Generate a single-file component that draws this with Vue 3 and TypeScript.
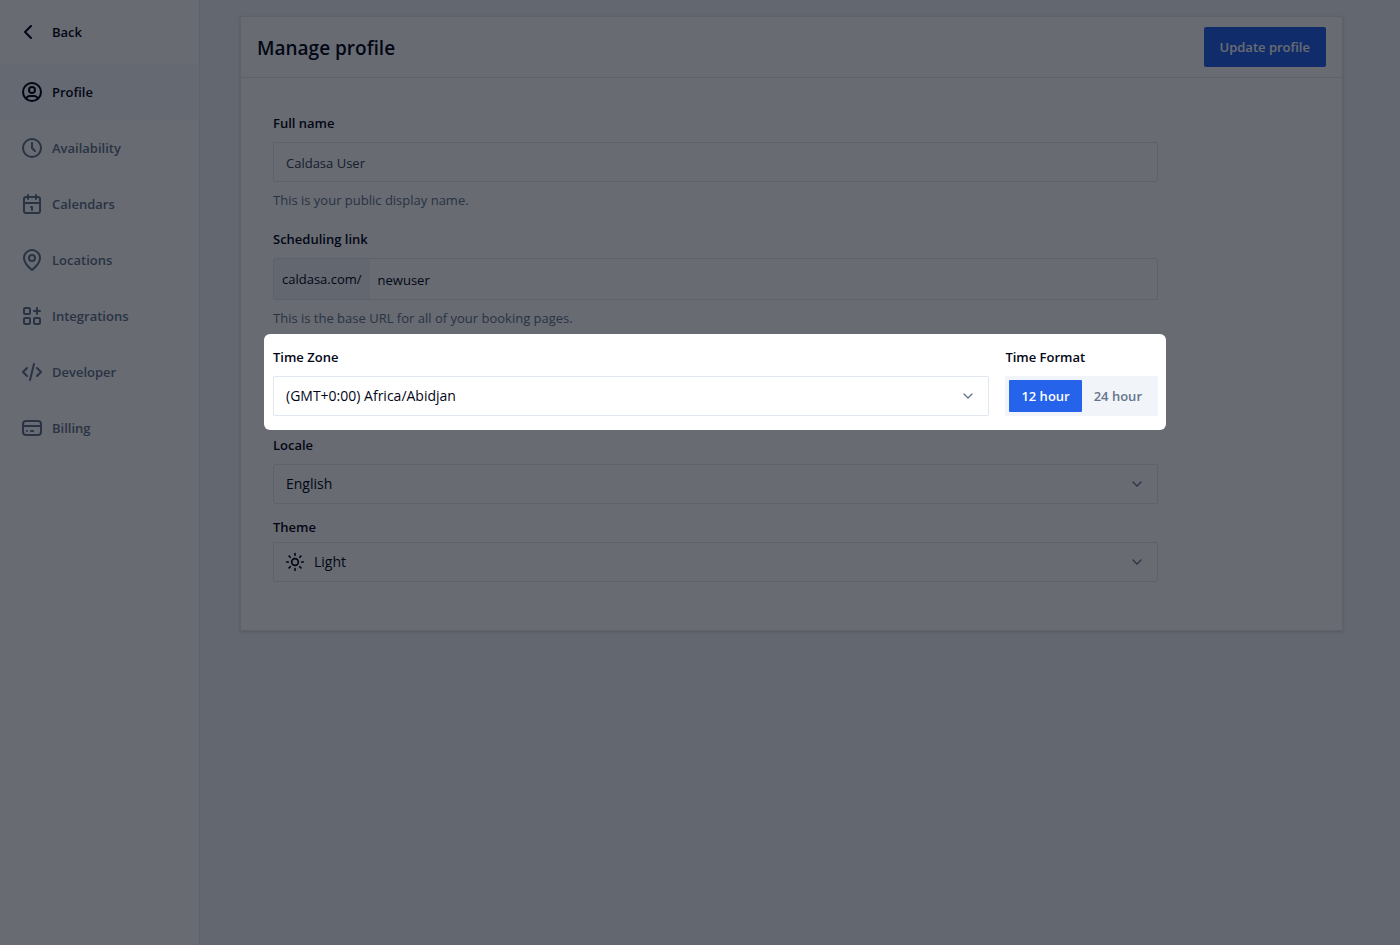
<script setup lang="ts">
import { ref } from 'vue'

interface NavItem {
  label: string
  paths: string[]
}

const navItems: NavItem[] = [
  {
    label: 'Profile',
    paths: [
      'M3 12a9 9 0 1 0 18 0a9 9 0 1 0-18 0',
      'M9 10a3 3 0 1 0 6 0a3 3 0 1 0-6 0',
      'M6.168 18.849A4 4 0 0 1 10 16h4a4 4 0 0 1 3.834 2.855',
    ],
  },
  { label: 'Availability', paths: ['M3 12a9 9 0 1 0 18 0a9 9 0 1 0-18 0', 'M12 7v5l3 3'] },
  {
    label: 'Calendars',
    paths: [
      'M6 5h12a2 2 0 0 1 2 2v12a2 2 0 0 1-2 2H6a2 2 0 0 1-2-2V7a2 2 0 0 1 2-2z',
      'M16 3v4M8 3v4M4 11h16M11 15h1v3',
    ],
  },
  {
    label: 'Locations',
    paths: ['M20 10c0 6-8 12-8 12s-8-6-8-12a8 8 0 0 1 16 0z', 'M9 10a3 3 0 1 0 6 0a3 3 0 1 0-6 0'],
  },
  {
    label: 'Integrations',
    paths: [
      'M5 4h4a1 1 0 0 1 1 1v4a1 1 0 0 1-1 1H5a1 1 0 0 1-1-1V5a1 1 0 0 1 1-1z',
      'M5 14h4a1 1 0 0 1 1 1v4a1 1 0 0 1-1 1H5a1 1 0 0 1-1-1v-4a1 1 0 0 1 1-1z',
      'M15 14h4a1 1 0 0 1 1 1v4a1 1 0 0 1-1 1h-4a1 1 0 0 1-1-1v-4a1 1 0 0 1 1-1z',
      'M14 7h6M17 4v6',
    ],
  },
  { label: 'Developer', paths: ['M7 8l-4 4 4 4', 'M17 8l4 4-4 4', 'M14 4l-4 16'] },
  {
    label: 'Billing',
    paths: [
      'M6 5h12a3 3 0 0 1 3 3v8a3 3 0 0 1-3 3H6a3 3 0 0 1-3-3V8a3 3 0 0 1 3-3z',
      'M3 10h18M7 15h.01M11 15h2',
    ],
  },
]

const active = ref('Profile')
const fullName = ref('Caldasa User')
const link = ref('newuser')
const timeZone = ref('(GMT+0:00) Africa/Abidjan')
const timeFormat = ref('12 hour')
const formats = ['12 hour', '24 hour']
const locale = ref('English')
const theme = ref('Light')
</script>

<template>
  <div class="page">
    <nav class="sidebar" aria-label="Settings">
      <a class="back" href="#">
        <svg class="icon" viewBox="0 0 24 24" aria-hidden="true"><path d="M11 6l-6 6 6 6" /></svg>
        <span>Back</span>
      </a>
      <a
        v-for="item in navItems"
        :key="item.label"
        class="nav-item"
        :class="{ active: item.label === active }"
        href="#"
        @click.prevent="active = item.label"
      >
        <svg class="icon" viewBox="0 0 24 24" aria-hidden="true">
          <path v-for="d in item.paths" :key="d" :d="d" />
        </svg>
        <span>{{ item.label }}</span>
      </a>
    </nav>

    <main class="main">
      <form class="card" @submit.prevent>
        <header class="card-header">
          <h1>Manage profile</h1>
          <button class="primary" type="submit">Update profile</button>
        </header>
        <div class="fields">
          <div class="field">
            <label for="name">Full name</label>
            <input id="name" v-model="fullName" class="control name" type="text" />
            <p>This is your public display name.</p>
          </div>
          <div class="field">
            <label for="link">Scheduling link</label>
            <div class="control prefixed">
              <span class="prefix">caldasa.com/</span>
              <input id="link" v-model="link" type="text" />
            </div>
            <p>This is the base URL for all of your booking pages.</p>
          </div>
          <div class="spotlight">
            <div class="field grow">
              <label for="zone">Time Zone</label>
              <div class="select">
                <select id="zone" v-model="timeZone" class="control">
                  <option>(GMT+0:00) Africa/Abidjan</option>
                </select>
                <svg class="chevron" viewBox="0 0 16 16" aria-hidden="true"><path d="M4 6l4 4 4-4" /></svg>
              </div>
            </div>
            <div class="field" role="group" aria-labelledby="format-label">
              <span id="format-label" class="label">Time Format</span>
              <div class="segmented">
                <button
                  v-for="f in formats"
                  :key="f"
                  type="button"
                  :class="{ on: f === timeFormat }"
                  :aria-pressed="f === timeFormat"
                  @click="timeFormat = f"
                >
                  {{ f }}
                </button>
              </div>
            </div>
          </div>
          <div class="field">
            <label for="locale">Locale</label>
            <div class="select">
              <select id="locale" v-model="locale" class="control">
                <option>English</option>
              </select>
              <svg class="chevron" viewBox="0 0 16 16" aria-hidden="true"><path d="M4 6l4 4 4-4" /></svg>
            </div>
          </div>
          <div class="field theme">
            <label for="theme">Theme</label>
            <div class="select">
              <select id="theme" v-model="theme" class="control with-icon">
                <option>Light</option>
                <option>Dark</option>
              </select>
              <svg class="sun" viewBox="0 0 24 24" aria-hidden="true">
                <circle cx="12" cy="12" r="4" />
                <path
                  d="M12 2v2M12 20v2M2 12h2M20 12h2M4.93 4.93l1.41 1.41M17.66 17.66l1.41 1.41M4.93 19.07l1.41-1.41M17.66 6.34l1.41-1.41"
                />
              </svg>
              <svg class="chevron" viewBox="0 0 16 16" aria-hidden="true"><path d="M4 6l4 4 4-4" /></svg>
            </div>
          </div>
        </div>
      </form>
    </main>
  </div>
</template>

<style>
body {
  margin: 0;
  background: #f1f5f9;
}
</style>

<style scoped>
* {
  box-sizing: border-box;
}
.page {
  display: flex;
  min-height: 100vh;
  overflow: hidden;
  font-family: 'Open Sans', 'Noto Sans', sans-serif;
  font-size: 13px;
  line-height: 20px;
  color: #020617;
}
button,
input,
select {
  font: inherit;
  color: inherit;
}
svg {
  fill: none;
  stroke: currentColor;
  stroke-width: 2;
  stroke-linecap: round;
  stroke-linejoin: round;
}
.sidebar {
  flex: 0 0 200px;
  background: #fff;
  border-right: 1px solid #e2e8f0;
}
.back,
.nav-item {
  display: flex;
  align-items: center;
  gap: 8px;
  height: 56px;
  padding: 0 20px;
  color: #64748b;
  font-weight: 600;
  text-decoration: none;
}
.back {
  height: 64px;
  color: #020617;
}
.nav-item.active {
  background: #f8fafc;
  color: #020617;
}
.icon {
  width: 24px;
  height: 24px;
}
.main {
  flex: 1;
  min-width: 0;
  padding: 16px 57px 16px 40px;
}
.card {
  background: #fff;
  border: 1px solid #e2e8f0;
  border-radius: 2px;
  box-shadow: 0 1px 3px rgba(0, 0, 0, 0.15);
}
.card-header {
  display: flex;
  align-items: center;
  justify-content: space-between;
  height: 61px;
  padding: 0 16px;
  border-bottom: 1px solid #e2e8f0;
}
h1 {
  margin: 0;
  padding-top: 2px;
  font-size: 19px;
  line-height: 28px;
  font-weight: 600;
}
.primary {
  height: 40px;
  padding: 0 16px;
  border: 0;
  border-radius: 2px;
  background: #2563eb;
  color: #fff;
  font-weight: 600;
}
.fields {
  max-width: 949px;
  padding: 35px 32px 48px;
}
.field {
  display: flex;
  flex-direction: column;
}
.field + .field {
  margin-top: 19px;
}
label,
.label {
  margin-bottom: 9px;
  font-weight: 600;
}
.control {
  width: 100%;
  height: 40px;
  padding: 0 12px;
  border: 1px solid #e2e8f0;
  border-radius: 2px;
  background: #fff;
  appearance: none;
}
.name {
  padding-top: 2px;
  color: #334155;
}
.prefixed {
  display: flex;
  height: 42px;
  padding: 0;
}
.prefix {
  padding: 10px 8px;
  background: #f1f5f9;
}
.prefixed input {
  flex: 1;
  min-width: 0;
  padding: 2px 8px 0;
  border: 0;
  background: none;
}
p {
  margin: 8px 0 0;
  color: #64748b;
}
.spotlight {
  position: relative;
  z-index: 1;
  display: flex;
  gap: 16px;
  margin: 6px -8px 5px -9px;
  padding: 13px 8px 14px 9px;
  border-radius: 6px;
  background: #fff;
  box-shadow: 0 0 0 4000px rgba(3, 8, 20, 0.6);
}
.spotlight .field {
  margin-top: 0;
}
.grow {
  flex: 1;
}
.select {
  position: relative;
}
.select select {
  display: block;
  font-size: 14px;
}
.chevron {
  position: absolute;
  top: 12px;
  right: 13px;
  width: 16px;
  height: 16px;
  color: #64748b;
  stroke-width: 1.3;
  pointer-events: none;
}
.segmented {
  display: flex;
  padding: 4px;
  border-radius: 2px;
  background: #f1f5f9;
}
.segmented button {
  height: 32px;
  padding: 0 12px;
  border: 0;
  border-radius: 1px;
  background: none;
  color: #64748b;
  font-weight: 600;
}
.segmented .on {
  background: #2563eb;
  color: #fff;
}
.field.theme {
  margin-top: 13px;
}
.theme label {
  margin-bottom: 5px;
}
.with-icon {
  padding-left: 40px;
}
.sun {
  position: absolute;
  top: 10px;
  left: 12px;
  width: 20px;
  height: 20px;
  pointer-events: none;
}
</style>
